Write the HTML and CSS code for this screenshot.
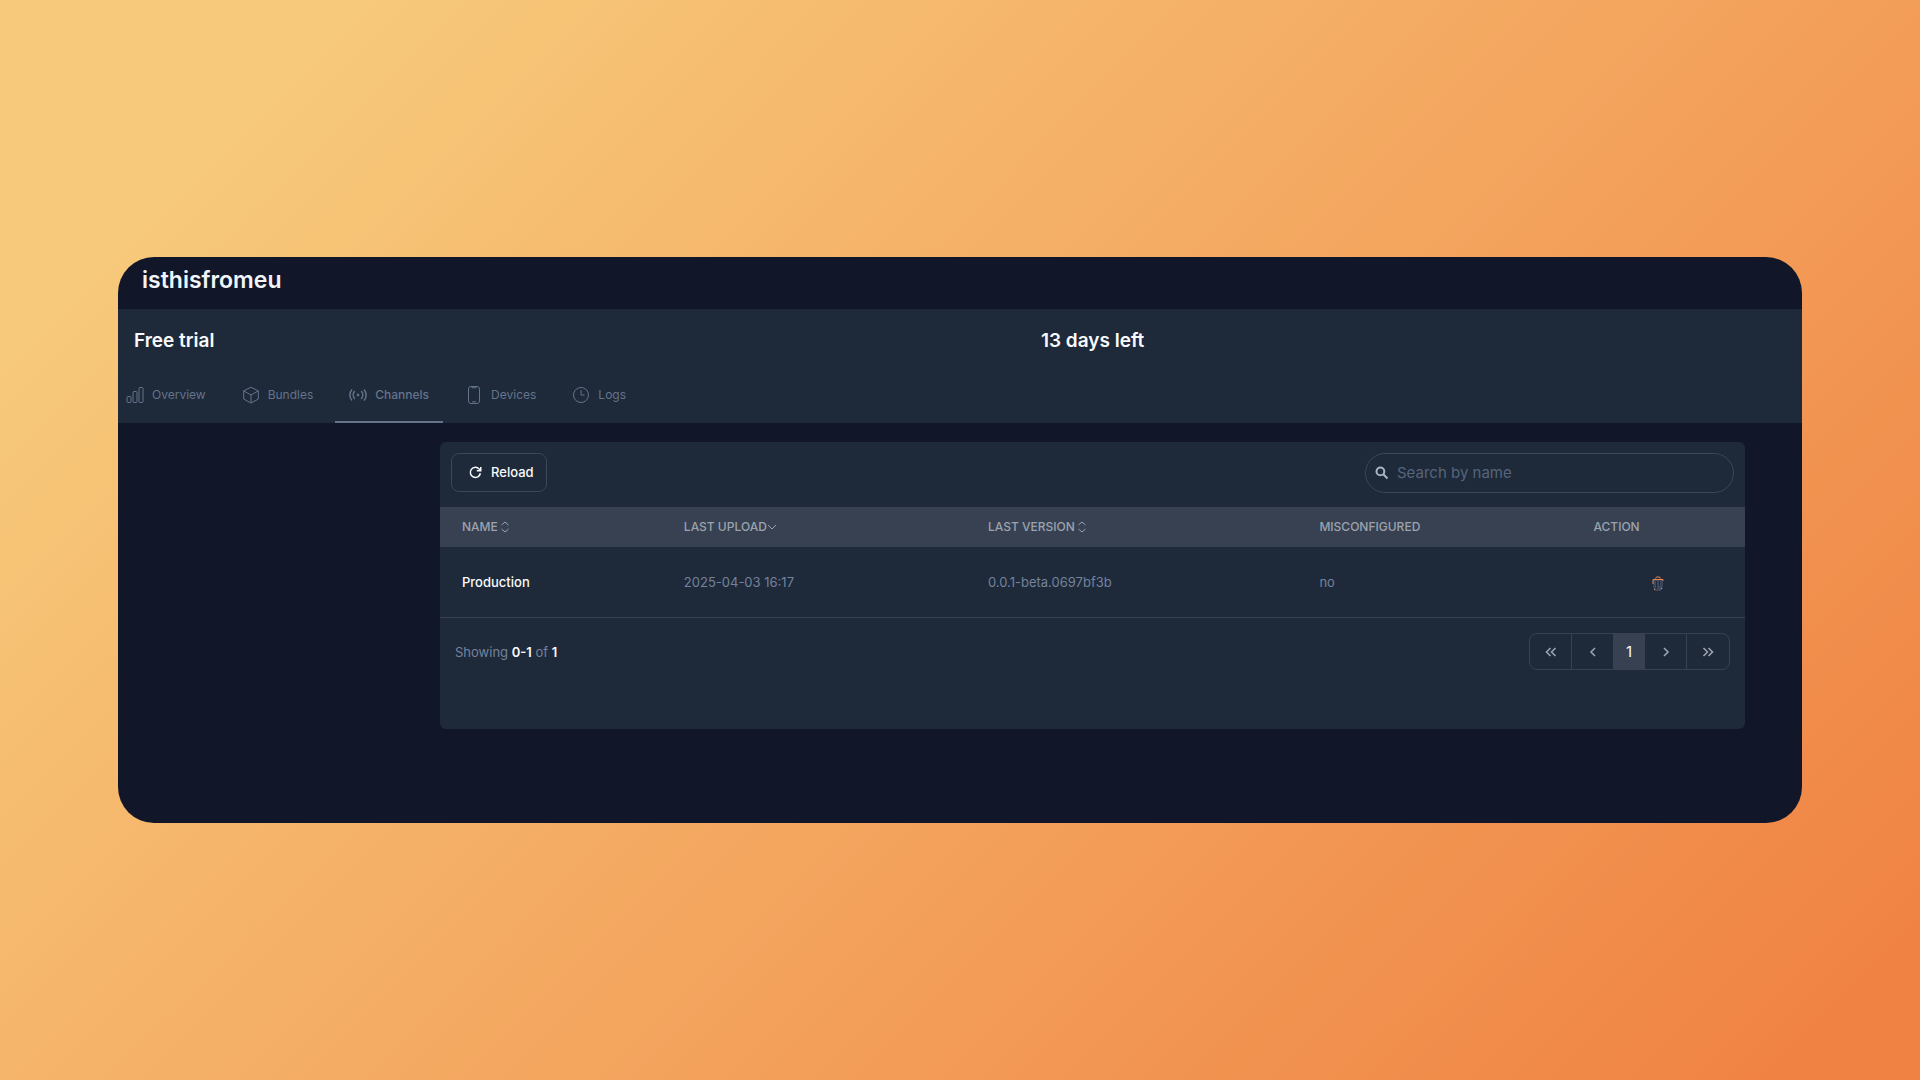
FILE: index.html
```html
<!DOCTYPE html>
<html lang="en">
<head>
  <meta charset="UTF-8">
  <meta name="viewport" content="width=device-width, initial-scale=1.0">
  <title>isthisfromeu | Channels</title>
  <link rel="stylesheet" href="styles.css">
</head>
<body>
  <div class="window">
    <header class="app-header">
      <h1>isthisfromeu</h1>
    </header>

    <div class="trial">
      <p>Free trial</p>
      <p>13 days left</p>
    </div>

    <nav class="tabs" aria-label="App sections">
      <a class="tab" href="#overview">
        <svg class="tab-icon" viewBox="0 0 18 18" aria-hidden="true">
          <rect x="1" y="10.5" width="4" height="6" rx="1"/>
          <rect x="7" y="5.5" width="4" height="11" rx="1"/>
          <rect x="13" y="1.5" width="4" height="15" rx="1"/>
        </svg>
        Overview
      </a>
      <a class="tab" href="#bundles">
        <svg class="tab-icon" viewBox="0 0 18 18" aria-hidden="true">
          <path d="M9 1.2l7.3 3.7v8.2L9 17l-7.3-3.9V4.9zM1.7 4.9L9 9l7.3-4.1M9 9v8"/>
        </svg>
        Bundles
      </a>
      <a class="tab active" href="#channels" aria-current="page">
        <svg class="tab-icon" viewBox="0 0 18 18" aria-hidden="true">
          <path class="waves" d="M3 3.4a8.4 8.4 0 0 0 0 11.2M5.7 5.1a6 6 0 0 0 0 7.8M15 3.4a8.4 8.4 0 0 1 0 11.2M12.3 5.1a6 6 0 0 1 0 7.8"/>
          <circle class="dot" cx="9" cy="9" r="1"/>
        </svg>
        Channels
      </a>
      <a class="tab" href="#devices">
        <svg class="tab-icon" viewBox="0 0 18 18" aria-hidden="true">
          <rect x="3.5" y="0.5" width="11" height="17" rx="2.5"/>
          <path d="M7 .8v1h4v-1M7 15.8h4"/>
        </svg>
        Devices
      </a>
      <a class="tab" href="#logs">
        <svg class="tab-icon" viewBox="0 0 18 18" aria-hidden="true">
          <circle cx="9" cy="9" r="7.5"/>
          <path d="M9 4v5h3.5"/>
        </svg>
        Logs
      </a>
    </nav>

    <main class="card">
      <div class="toolbar">
        <button class="reload" type="button">
          <svg viewBox="0 0 16 16" aria-hidden="true">
            <path d="M13.2 8.8A5.4 5.4 0 1 1 12 4.4l1.4 1.5"/>
            <path d="M13.6 2v4.2H9.4"/>
          </svg>
          Reload
        </button>
        <label class="search">
          <svg viewBox="0 0 14 14" aria-hidden="true">
            <circle cx="5.4" cy="5.4" r="3.9"/>
            <path d="M8.3 8.3l4.2 4.2"/>
          </svg>
          <input type="search" placeholder="Search by name" aria-label="Search by name">
        </label>
      </div>

      <table class="channels">
        <colgroup>
          <col class="col-name">
          <col class="col-upload">
          <col class="col-version">
          <col class="col-misconfigured">
          <col class="col-action">
        </colgroup>
        <thead>
          <tr>
            <th>
              <span class="sort">Name
                <svg viewBox="0 0 8 12" aria-hidden="true"><path d="M.5 4L4 1l3.5 3M.5 8L4 11l3.5-3"/></svg>
              </span>
            </th>
            <th>
              <span class="sort sorted">Last upload
                <svg viewBox="0 0 8 12" aria-hidden="true"><path d="M0 4l4 4 4-4"/></svg>
              </span>
            </th>
            <th>
              <span class="sort">Last version
                <svg viewBox="0 0 8 12" aria-hidden="true"><path d="M.5 4L4 1l3.5 3M.5 8L4 11l3.5-3"/></svg>
              </span>
            </th>
            <th>Misconfigured</th>
            <th>Action</th>
          </tr>
        </thead>
        <tbody>
          <tr>
            <td class="name">Production</td>
            <td>2025-04-03 16:17</td>
            <td>0.0.1-beta.0697bf3b</td>
            <td>no</td>
            <td class="action">
              <button class="delete" type="button" aria-label="Delete Production">
                <svg viewBox="0 0 12 15" aria-hidden="true">
                  <path class="bin" d="M1.5 4.5l.5 8.500 1.500 1.500h5l1.500-1.500.5-8.500z"/>
                  <path class="slots" d="M4.5 5v8M7.5 5v5"/>
                  <path class="lid" d="M1 8V3.5h10V5M3.5 2.5L4.5 1h3l1 1.5M2 13.5h1M9 12.5h1"/>
                </svg>
              </button>
            </td>
          </tr>
        </tbody>
      </table>

      <div class="table-footer">
        <p class="showing">Showing <b>0-1</b> of <b>1</b></p>
        <nav class="pagination" aria-label="Pagination">
          <button type="button" aria-label="First page">
            <svg viewBox="0 0 12 12" aria-hidden="true"><path d="M5.5 2l-4 4 4 4M10.5 2l-4 4 4 4"/></svg>
          </button>
          <button type="button" aria-label="Previous page">
            <svg viewBox="0 0 12 12" aria-hidden="true"><path d="M8 2L4 6l4 4"/></svg>
          </button>
          <button class="current" type="button" aria-current="page">1</button>
          <button type="button" aria-label="Next page">
            <svg viewBox="0 0 12 12" aria-hidden="true"><path d="M4 2l4 4-4 4"/></svg>
          </button>
          <button type="button" aria-label="Last page">
            <svg viewBox="0 0 12 12" aria-hidden="true"><path d="M1.5 2l4 4-4 4M6.5 2l4 4-4 4"/></svg>
          </button>
        </nav>
      </div>
    </main>
  </div>
</body>
</html>
```

FILE: styles.css
```css
* {
  margin: 0;
  padding: 0;
  box-sizing: border-box;
}
body {
  min-height: 100vh;
  display: flex;
  align-items: center;
  padding: 0 118px;
  background: linear-gradient(135deg, #f7c97a 12%, #f08344 95%);
  font-family: Inter, "Liberation Sans", sans-serif;
  font-size: 13px;
  line-height: 20px;
  color: #74839b;
}
svg {
  fill: none;
  stroke: currentColor;
  flex: none;
}
button {
  font: inherit;
  color: inherit;
  background: none;
  border: none;
  cursor: pointer;
}
.window {
  flex: 1;
  background: #111729;
  border-radius: 36px;
  overflow: hidden;
}
.app-header {
  height: 52px;
  padding: 7px 24px;
}
.app-header h1 {
  font-size: 23px;
  line-height: 32px;
  font-weight: 600;
  color: #f1f5f9;
}
.trial {
  display: grid;
  grid-template-columns: 54.9% 1fr;
  padding: 16px 16px 12px;
  background: #1e293a;
  color: #f8fafc;
  font-size: 19px;
  line-height: 32px;
  font-weight: 600;
}
.tabs {
  display: flex;
  gap: 8px;
  background: #1e293a;
}
.tab {
  height: 54px;
  display: flex;
  align-items: center;
  gap: 8px;
  padding: 0 14px;
  border-bottom: 2px solid transparent;
  color: #64748b;
  font-size: 12px;
  text-decoration: none;
}
.tab:first-child {
  padding-left: 8px;
}
.tab.active {
  border-color: #64748b;
  font-weight: 500;
}
.tab-icon {
  width: 18px;
  height: 18px;
}
.tab-icon .waves {
  stroke-width: 1.5;
}
.tab-icon .dot {
  fill: currentColor;
}
.card {
  margin: 19px 57px 94px 322px;
  background: #1e293a;
  border-radius: 6px;
  overflow: hidden;
}
.toolbar {
  display: flex;
  justify-content: space-between;
  align-items: flex-start;
  padding: 11px 11px 14px;
}
.reload {
  height: 39px;
  display: flex;
  align-items: center;
  gap: 8px;
  padding: 0 12px 0 16px;
  border: 1px solid #3b4759;
  border-radius: 8px;
  color: #f8fafc;
  font-weight: 500;
}
.reload svg {
  width: 15px;
  height: 15px;
  stroke-width: 1.6;
}
.search {
  width: 369px;
  height: 40px;
  display: flex;
  align-items: center;
  gap: 8px;
  padding: 0 9px;
  border: 1px solid #3b4759;
  border-radius: 20px;
  color: #aab4c3;
}
.search svg {
  width: 14px;
  height: 14px;
  stroke-width: 2;
}
.search input {
  flex: 1;
  min-width: 0;
  background: none;
  border: none;
  outline: none;
  color: #f8fafc;
  font: inherit;
  font-size: 15px;
}
.search input::placeholder {
  color: #56657b;
}
.channels {
  width: 100%;
  table-layout: fixed;
  border-collapse: collapse;
}
.col-name {
  width: 17%;
}
.col-upload {
  width: 23.3%;
}
.col-version {
  width: 25.4%;
}
.col-misconfigured {
  width: 21%;
}
.channels th,
.channels td {
  padding: 0 22px;
  text-align: left;
}
.channels th {
  height: 40px;
  background: #374151;
  color: #9ca3af;
  font-size: 12px;
  font-weight: 500;
  text-transform: uppercase;
}
.sort {
  display: flex;
  align-items: center;
  gap: 3px;
}
.sort.sorted {
  gap: 1px;
}
.sort svg {
  width: 8px;
  height: 12px;
}
.channels td {
  height: 71px;
  border-bottom: 1px solid #374151;
}
.channels .name {
  color: #f8fafc;
  font-weight: 500;
}
.channels .action {
  text-align: center;
}
.delete {
  vertical-align: middle;
}
.delete svg {
  width: 12px;
  height: 15px;
  display: block;
}
.delete .bin {
  fill: #3e4a5c;
  stroke: #3e4a5c;
}
.delete .slots {
  stroke: #1e293a;
}
.delete .lid {
  stroke: #e88a54;
}
.table-footer {
  display: flex;
  justify-content: space-between;
  align-items: center;
  padding: 15px 15px 59px;
}
.showing b {
  color: #f8fafc;
  font-weight: 600;
}
.pagination {
  height: 37px;
  display: flex;
  border: 1px solid #374151;
  border-radius: 8px;
}
.pagination button {
  width: 42px;
  display: flex;
  align-items: center;
  justify-content: center;
  border-right: 1px solid #374151;
  color: #9ca3af;
}
.pagination button:last-child {
  border-right: none;
}
.pagination .current {
  width: 31px;
  background: #374151;
  color: #f8fafc;
  font-size: 15px;
}
.pagination svg {
  width: 12px;
  height: 12px;
  stroke-width: 1.6;
}
```
